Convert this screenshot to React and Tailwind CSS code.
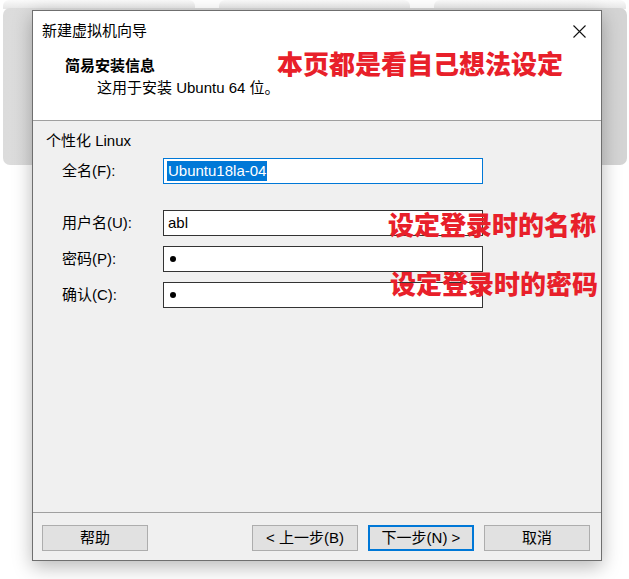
import React from "react";

const FONT = { fontFamily: '"Liberation Sans", "Noto Sans CJK SC", sans-serif' };
const CJK = { fontFamily: '"Noto Sans CJK SC", "Noto Sans", sans-serif' };

function Field({ label, children, focused, mt }) {
  return (
    <div className={`flex items-center h-[26px] ${mt}`}>
      <div className="w-[130px] shrink-0 pl-[29px] text-[15px] text-black leading-[20px] whitespace-nowrap">{label}</div>
      <div
        className={`w-[320px] h-[26px] shrink-0 bg-white flex items-center pl-[3px] ${
          focused ? "border border-[#0078d7]" : "border border-[#333333]"
        }`}
      >
        {children}
      </div>
    </div>
  );
}

function Btn({ children, primary }) {
  return (
    <div
      className={`w-[106px] h-[26px] flex items-center justify-center text-[15px] text-black bg-[#e1e1e1] ${
        primary ? "border-2 border-[#0078d7]" : "border border-[#adadad]"
      }`}
    >
      {children}
    </div>
  );
}

export default function App() {
  return (
    <div className="relative w-[629px] h-[579px] bg-white overflow-hidden" style={FONT}>
      {/* backdrop panels */}
      <div className="absolute left-0 top-0 w-[629px] h-[9px] flex gap-[24px] px-[3px]">
        <div className="flex-1 rounded-t-md bg-gradient-to-b from-[#fafafa] to-[#e6e6e6]" />
        <div className="flex-1 rounded-t-md bg-gradient-to-b from-[#fafafa] to-[#e6e6e6]" />
        <div className="flex-1 rounded-t-md bg-gradient-to-b from-[#fafafa] to-[#e6e6e6]" />
      </div>
      <div className="absolute left-[3px] top-[8px] w-[624px] h-[157px] rounded-[7px] bg-gradient-to-r from-[#dcdcdc] via-[#d6d6d6] to-[#d4d4d4]" />

      {/* dialog */}
      <div className="absolute left-[32px] top-[10px] w-[570px] h-[551px] border border-[#6f6f6f] bg-[#f0f0f0] flex flex-col shadow-[0_6px_18px_rgba(0,0,0,0.28)]">
        <div className="h-[110px] bg-white border-b border-[#a0a0a0] flex flex-col">
          <div className="flex items-center justify-between pl-[9px] pr-[15px] pt-[9px] h-[29px]">
            <span className="text-[15px] leading-[20px] text-black" style={CJK}>新建虚拟机向导</span>
            <svg width="13" height="13" viewBox="0 0 13 13" className="mt-[2px]">
              <path d="M0.5 0.5 L12.5 12.5 M12.5 0.5 L0.5 12.5" stroke="#111" strokeWidth="1.1" fill="none" />
            </svg>
          </div>
          <div className="pl-[32px] mt-[15px] text-[15px] leading-[20px] font-bold text-black" style={CJK}>简易安装信息</div>
          <div className="pl-[64px] mt-[3px] text-[15px] leading-[20px] text-black">这用于安装 Ubuntu 64 位。</div>
        </div>

        <div className="flex-1 flex flex-col">
          <div className="pl-[13px] mt-[10px] text-[15px] leading-[20px] text-black">个性化 Linux</div>
          <Field label="全名(F):" focused mt="mt-[7px]">
            <span className="bg-[#0078d7] text-white text-[15px] leading-[20px] px-[1px]">Ubuntu18la-04</span>
          </Field>
          <Field label="用户名(U):" mt="mt-[26px]">
            <span className="text-[15px] leading-[20px] text-black pl-[1px]">abl</span>
          </Field>
          <Field label="密码(P):" mt="mt-[10px]">
            <span className="ml-[3px] w-[6px] h-[6px] rounded-full bg-black" />
          </Field>
          <Field label="确认(C):" mt="mt-[10px]">
            <span className="ml-[3px] w-[6px] h-[6px] rounded-full bg-black" />
          </Field>
        </div>

        <div className="border-t border-[#a0a0a0] h-[48px] flex items-start pt-[12px] pl-[9px] pr-[11px]">
          <Btn>帮助</Btn>
          <div className="ml-auto flex gap-[10px]">
            <Btn>&lt; 上一步(B)</Btn>
            <Btn primary>下一步(N) &gt;</Btn>
            <Btn>取消</Btn>
          </div>
        </div>
      </div>

      {/* red annotations */}
      <div className="absolute left-[277px] top-[47px] text-[26px] leading-[32px] font-black text-[#e8202a] whitespace-nowrap" style={CJK}>
        本页都是看自己想法设定
      </div>
      <div className="absolute left-[388px] top-[208px] text-[26px] leading-[32px] font-black text-[#e8202a] whitespace-nowrap" style={CJK}>
        设定登录时的名称
      </div>
      <div className="absolute left-[390px] top-[267px] text-[26px] leading-[32px] font-black text-[#e8202a] whitespace-nowrap" style={CJK}>
        设定登录时的密码
      </div>
    </div>
  );
}
